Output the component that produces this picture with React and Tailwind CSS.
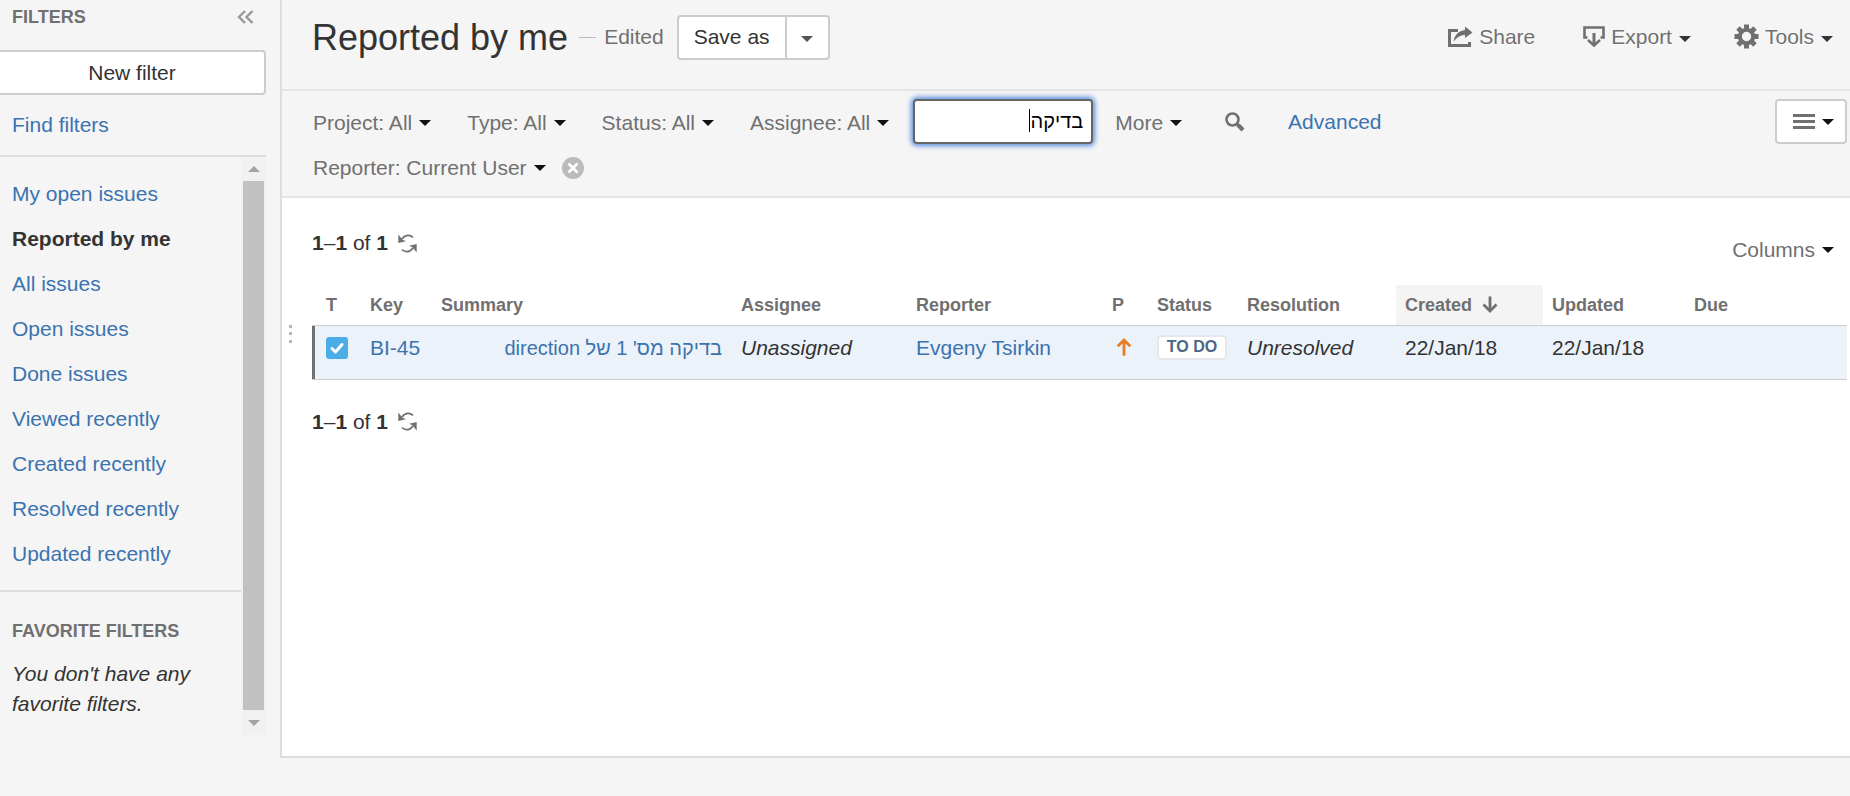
import React from "react";

const filters = [
  "My open issues",
  "Reported by me",
  "All issues",
  "Open issues",
  "Done issues",
  "Viewed recently",
  "Created recently",
  "Resolved recently",
  "Updated recently",
];

function Caret({ className = "text-[#111]" }) {
  return (
    <svg className={className} width="12" height="6" viewBox="0 0 12 6" aria-hidden="true">
      <path d="M0 0h12L6 6z" fill="currentColor" />
    </svg>
  );
}

function ShareIcon() {
  return (
    <svg width="26" height="22" viewBox="0 0 26 22" fill="none" aria-hidden="true">
      <path d="M11 4.500H2.500v15h20V16" stroke="currentColor" strokeWidth="3" />
      <path d="M6.500 15.500C8 8.500 11.500 4.800 18 4V0.500L25.500 6.500 18 12V8.800C13 9.200 10 11.500 6.500 15.500z" fill="currentColor" />
    </svg>
  );
}

function ExportIcon() {
  return (
    <svg width="22" height="22" viewBox="0 0 22 22" fill="none" stroke="currentColor" aria-hidden="true">
      <path d="M4.500 11.500H1.500V1.500h19v10h-3" strokeWidth="2.600" />
      <path d="M11 7v11" strokeWidth="3" />
      <path d="M5 14l6 5.500 6-5.500" strokeWidth="2.600" />
    </svg>
  );
}

function GearIcon() {
  return (
    <svg width="25" height="25" viewBox="0 0 25 25" fill="none" stroke="currentColor" aria-hidden="true">
      <circle cx="12.5" cy="12.500" r="6.700" strokeWidth="4" />
      <path
        d="M12.500 0.500v5M12.500 19.500v5M0.500 12.500h5M19.500 12.500h5M4 4l3.500 3.500M17.500 17.500L21 21M21 4l-3.500 3.500M7.500 17.500L4 21"
        strokeWidth="5"
      />
    </svg>
  );
}

function RefreshIcon() {
  return (
    <svg width="19" height="19" viewBox="0 0 19 19" fill="none" aria-hidden="true">
      <path d="M4 5C7 0.500 12 0.300 15 3.500M15 14C12 18.500 7 18.700 4 15.500" stroke="currentColor" strokeWidth="1.800" />
      <path d="M0.300 0.500V9l7.700-1.700-3.400-1.600zM18.700 18.500V10L11 11.700l3.400 1.600z" fill="currentColor" />
    </svg>
  );
}

function SearchIcon() {
  return (
    <svg width="20" height="20" viewBox="0 0 20 20" fill="none" stroke="currentColor" aria-hidden="true">
      <circle cx="7.500" cy="7.500" r="6" strokeWidth="2.600" />
      <path d="M11.500 11.500l2 2" strokeWidth="3" />
      <path d="M13 13l5 5" strokeWidth="4.200" />
    </svg>
  );
}

function FilterMenu({ children }) {
  return (
    <button type="button" className="flex items-center gap-[7px] text-[#707070]">
      {children}
      <Caret />
    </button>
  );
}

function HeaderAction({ icon, label, menu }) {
  return (
    <button type="button" className="flex items-center text-[#707070] [text-shadow:0_1px_0_#fff]">
      {icon}
      <span className="ml-[6px]">{label}</span>
      {menu && <span className="mt-1 ml-[7px]"><Caret className="text-[#333]" /></span>}
    </button>
  );
}

function ResultCount() {
  return (
    <div className="flex items-center gap-[10px]">
      <span>
        <b>1</b>–<b>1</b> of <b>1</b>
      </span>
      <button type="button" aria-label="Refresh results" className="text-[#707070]">
        <RefreshIcon />
      </button>
    </div>
  );
}

function Sidebar() {
  return (
    <aside className="flex w-[280px] shrink-0 flex-col pr-[14px] pb-[61px]">
      <div className="flex h-[50px] items-start justify-between pt-2 pl-3 pr-3">
        <h2 className="text-[18px] leading-[18px] font-bold text-[#707070]">FILTERS</h2>
        <button type="button" aria-label="Collapse sidebar" className="pt-[2px] text-[#999]">
          <svg width="17" height="14" viewBox="0 0 17 14" fill="none" stroke="currentColor" strokeWidth="2.400" aria-hidden="true">
            <path d="M8 1L2 7l6 6M15.500 1l-6 6 6 6" />
          </svg>
        </button>
      </div>
      <button type="button" className="h-[45px] rounded-r-[4px] border-2 border-l-0 border-[#ccc] bg-white text-[#333]">
        New filter
      </button>
      <div className="flex h-[62px] items-center border-b-2 border-[#ddd] pl-3">
        <a href="#find" className="text-[#3b73af]">Find filters</a>
      </div>
      <div className="flex flex-1">
        <div className="flex-1">
          <ul className="border-b-2 border-[#ddd] py-[14px]">
            {filters.map((name) => (
              <li key={name} className="flex h-[45px] items-center pl-3">
                <a
                  href="#filter"
                  className={name === "Reported by me" ? "font-bold text-[#333]" : "text-[#3b73af]"}
                >
                  {name}
                </a>
              </li>
            ))}
          </ul>
          <div className="pt-6 pl-3">
            <h3 className="text-[18px] font-bold text-[#707070]">FAVORITE FILTERS</h3>
            <p className="mt-[13px] italic">You don't have any favorite filters.</p>
          </div>
        </div>
        <div className="flex w-[25px] flex-col items-center bg-[#f1f1f1] text-[#a3a3a3]">
          <div className="flex h-6 items-center">
            <svg width="12" height="6" viewBox="0 0 12 6" aria-hidden="true">
              <path d="M0 6h12L6 0z" fill="currentColor" />
            </svg>
          </div>
          <div className="w-[21px] flex-1 bg-[#c1c1c1]" />
          <div className="flex h-[25px] items-center">
            <Caret className="text-[#a3a3a3]" />
          </div>
        </div>
      </div>
    </aside>
  );
}

const th = "h-10 pl-[9px] text-left align-middle text-[18px] font-bold text-[#707070]";
const td = "pl-[9px] pt-[7px] align-top";

function IssueTable() {
  return (
    <table className="w-full table-fixed border-collapse">
      <colgroup>
        <col className="w-[49px]" />
        <col className="w-[71px]" />
        <col className="w-[300px]" />
        <col className="w-[175px]" />
        <col className="w-[196px]" />
        <col className="w-[45px]" />
        <col className="w-[90px]" />
        <col className="w-[158px]" />
        <col className="w-[147px]" />
        <col className="w-[142px]" />
        <col />
      </colgroup>
      <thead>
        <tr>
          <th className="h-10 pl-[14px] text-left align-middle text-[18px] font-bold text-[#707070]">T</th>
          <th className={th}>Key</th>
          <th className={th}>Summary</th>
          <th className={th}>Assignee</th>
          <th className={th}>Reporter</th>
          <th className={th}>P</th>
          <th className={th}>Status</th>
          <th className={th}>Resolution</th>
          <th className={`${th} bg-[#f4f4f4]`}>
            <span className="flex items-center gap-[10px]">
              Created
              <svg width="16" height="17" viewBox="0 0 16 17" fill="none" stroke="currentColor" aria-hidden="true">
                <path d="M8 0.500v14" strokeWidth="2.800" />
                <path d="M1.500 8.500L8 15l6.500-6.500" strokeWidth="2.800" />
              </svg>
            </span>
          </th>
          <th className={th}>Updated</th>
          <th className={th}>Due</th>
        </tr>
      </thead>
      <tbody>
        <tr className="h-[54px] border-y border-[#ccc] bg-[#ebf2f9]">
          <td className="p-0 align-top">
            <div className="h-[53px] border-l-[3px] border-[#707070] pt-[11px] pl-[11px]">
              <svg width="22" height="22" viewBox="0 0 22 22" role="img" aria-label="Task">
                <rect width="22" height="22" rx="3" fill="#4bade8" />
                <path d="M6 11.500l3.500 3.500L16 7.500" fill="none" stroke="#fff" strokeWidth="3" strokeLinecap="round" strokeLinejoin="round" />
              </svg>
            </div>
          </td>
          <td className={td}><a href="#BI-45" className="text-[#3b73af]">BI-45</a></td>
          <td className={`${td} pr-[10px]`} dir="rtl">
            <a href="#BI-45" className="text-[20px] text-[#3b73af]">בדיקה מס' 1 של direction</a>
          </td>
          <td className={`${td} italic`}>Unassigned</td>
          <td className={td}><a href="#user" className="text-[#3b73af]">Evgeny Tsirkin</a></td>
          <td className="pt-3 pl-[14px] align-top">
            <svg width="14" height="18" viewBox="0 0 14 18" fill="none" stroke="#ea7d24" strokeWidth="2.800" strokeLinecap="round" strokeLinejoin="round" role="img" aria-label="Medium">
              <path d="M7 2v14.500M1.500 7.500L7 2l5.500 5.500" />
            </svg>
          </td>
          <td className="pt-[9px] pl-[9px] align-top">
            <span className="flex h-[25px] w-[70px] items-center justify-center rounded-[4px] border-2 border-[#e4e8ed] bg-white text-[16px] font-bold text-[#4a6785]">
              TO DO
            </span>
          </td>
          <td className={`${td} italic`}>Unresolved</td>
          <td className={td}>22/Jan/18</td>
          <td className={td}>22/Jan/18</td>
          <td className={td} />
        </tr>
      </tbody>
    </table>
  );
}

export default function App() {
  return (
    <div className="flex min-h-screen bg-[#f5f5f5] font-['Liberation_Sans',Arial,sans-serif] text-[21px] leading-[30px] text-[#333]">
      <Sidebar />
      <main className="mb-[38px] flex min-w-0 flex-1 flex-col border-b-2 border-l-2 border-[#ddd] bg-white">
        <header className="flex h-[91px] items-start justify-between border-b-2 border-[#e5e5e5] bg-[#f5f5f5] pt-[15px] pr-[17px] pl-[30px]">
          <div className="flex h-[45px] items-center">
            <h1 className="text-[36px] leading-[44px]">Reported by me</h1>
            <span className="ml-[11px] h-px w-[17px] bg-[#bbb]" />
            <span className="ml-2 pb-[2px] text-[#707070]">Edited</span>
            <div className="ml-[13px] flex h-[45px] rounded-[4px] border-2 border-[#ccc] bg-white">
              <button type="button" className="px-[15px] pb-[2px]">Save as</button>
              <button type="button" aria-label="More save options" className="flex w-[43px] items-center justify-center border-l-2 border-[#ccc] pt-[2px]">
                <Caret className="text-[#555]" />
              </button>
            </div>
          </div>
          <div className="flex h-[45px] items-center gap-[48px] pb-[2px]">
            <HeaderAction icon={<ShareIcon />} label="Share" />
            <div className="flex gap-[43px]">
              <HeaderAction icon={<ExportIcon />} label="Export" menu />
              <HeaderAction icon={<GearIcon />} label="Tools" menu />
            </div>
          </div>
        </header>

        <section className="flex items-start justify-between border-b-2 border-[#e5e5e5] bg-[#f5f5f5] pt-2 pr-[3px] pb-[7px] pl-[31px]">
          <div>
            <div className="flex h-[45px] items-center">
              <div className="flex items-center gap-[36px] pt-[2px]">
                <FilterMenu>Project: All</FilterMenu>
                <FilterMenu>Type: All</FilterMenu>
                <FilterMenu>Status: All</FilterMenu>
                <FilterMenu>Assignee: All</FilterMenu>
              </div>
              <div className="relative ml-6">
                <input
                  type="text"
                  dir="rtl"
                  aria-label="Contains text"
                  defaultValue="בדיקה"
                  className="block h-[45px] w-[180px] rounded-[4px] border-2 border-[#666] bg-white px-2 text-[20px] text-black shadow-[0_0_5px_2px_#5b8fe0] outline-none"
                />
                <span className="absolute top-[10px] right-[63px] h-[23px] w-px bg-black" />
              </div>
              <div className="ml-[22px] pt-[2px]">
                <FilterMenu>More</FilterMenu>
              </div>
              <button type="button" aria-label="Search" className="ml-[43px] text-[#707070]">
                <SearchIcon />
              </button>
              <a href="#advanced" className="ml-[43px] text-[#3b73af]">Advanced</a>
            </div>
            <div className="flex h-[45px] items-center gap-4 pt-[2px]">
              <FilterMenu>Reporter: Current User</FilterMenu>
              <button type="button" aria-label="Remove reporter filter">
                <svg width="22" height="22" viewBox="0 0 22 22" aria-hidden="true">
                  <circle cx="11" cy="11" r="11" fill="#bbb" />
                  <path d="M6.500 6.500l9 9M15.500 6.500l-9 9" stroke="#fff" strokeWidth="2.600" />
                </svg>
              </button>
            </div>
          </div>
          <button type="button" aria-label="Layout" className="flex h-[45px] w-[72px] items-center justify-center gap-[7px] rounded-[4px] border-2 border-[#ccc] bg-white pl-1 text-[#707070]">
            <svg width="22" height="15" viewBox="0 0 22 15" aria-hidden="true">
              <path d="M0 0h22v3H0zM0 6h22v3H0zM0 12h22v3H0z" fill="currentColor" />
            </svg>
            <Caret />
          </button>
        </section>

        <section className="flex-1 pr-[3px] pl-[30px]">
          <div className="flex h-[87px] items-start justify-between pt-[30px] pr-[13px]">
            <ResultCount />
            <div className="pt-[7px]">
              <FilterMenu>Columns</FilterMenu>
            </div>
          </div>
          <div className="relative">
            <IssueTable />
            <svg className="absolute top-10 left-[-23px]" width="3" height="18" viewBox="0 0 3 18" aria-hidden="true">
              <path d="M0 0h3v3H0zM0 7h3v3H0zM0 15h3v3H0z" fill="#b5b5b5" />
            </svg>
          </div>
          <div className="pt-[27px]">
            <ResultCount />
          </div>
        </section>
      </main>
    </div>
  );
}
